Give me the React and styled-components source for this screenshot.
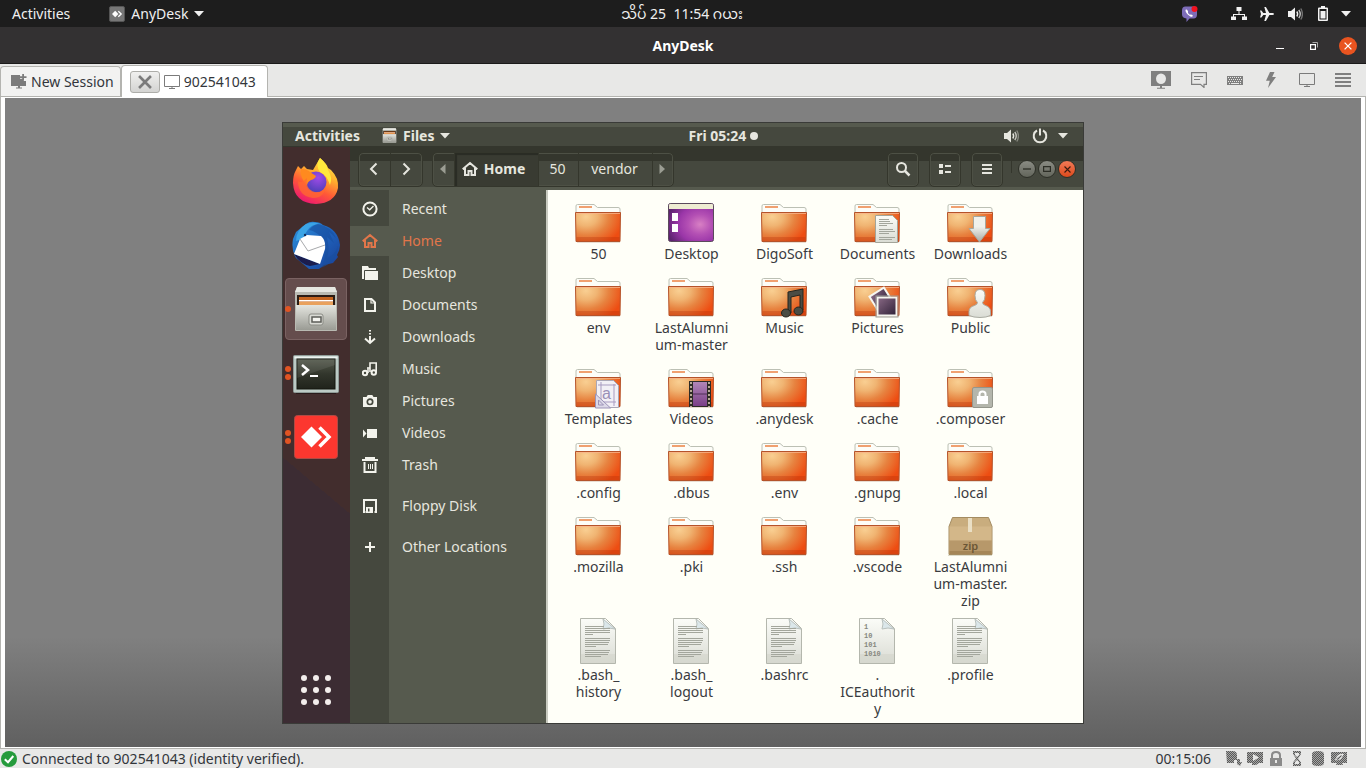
import React from "react";
import styled, { createGlobalStyle } from "styled-components";

const GlobalStyle = createGlobalStyle`
  * { box-sizing: border-box; }
  html, body { margin: 0; padding: 0; }
  body {
    font-family: "Noto Sans", "Open Sans", "Noto Sans Myanmar", Padauk, sans-serif;
    font-size: 14px;
    line-height: 20px;
    background: #e8e8e7;
  }
  button {
    font: inherit;
    color: inherit;
    background: none;
    border: 0;
    padding: 0;
    margin: 0;
    display: flex;
    align-items: center;
    justify-content: center;
  }
  a { color: inherit; text-decoration: none; }
  ul, nav, h1 { margin: 0; padding: 0; list-style: none; }
  svg { display: block; flex: none; }
`;

/* ---------- host desktop ---------- */

const Desktop = styled.div`
  display: flex;
  flex-direction: column;
  min-height: 100vh;
`;

const SystemBar = styled.header`
  display: grid;
  grid-template-columns: 1fr auto 1fr;
  align-items: center;
  height: 27px;
  padding: 0 14px;
  padding-left: 12px;
  background: #1d1d1d;
  color: #f0f0f0;
`;

const BarGroup = styled.div`
  display: flex;
  align-items: center;
  gap: ${(p) => p.$gap || 0}px;
  justify-content: ${(p) => (p.$end ? "flex-end" : "flex-start")};
`;

const AppMenu = styled.button`
  gap: 6px;
`;

const ClockButton = styled.button`
  gap: 4px;
  white-space: pre;
  line-height: 20px;
`;

const ClockDot = styled.span`
  width: 8px;
  height: 8px;
  border-radius: 50%;
  background: currentColor;
`;

const TrayButton = styled.button`
  width: ${(p) => p.$w || 20}px;
  height: 20px;
  margin-right: ${(p) => p.$after || 0}px;
`;

const TitleBar = styled.div`
  display: grid;
  grid-template-columns: 1fr auto 1fr;
  align-items: center;
  height: 37px;
  padding: 1px 9px 0;
  background: #333132;
  border-bottom: 1px solid #1b1a1a;
  color: #fff;
`;

const WindowTitle = styled.h1`
  grid-column: 2;
  font-size: 14px;
  line-height: 20px;
  font-weight: 700;
`;

const WindowButton = styled.button`
  width: 18px;
  height: 18px;
  border-radius: 50%;
  background: ${(p) => (p.$close ? "#e95420" : "transparent")};
`;

const TabBar = styled.div`
  display: flex;
  align-items: flex-end;
  height: 33px;
  padding-right: 13px;
  background: #e8e8e7;
  border-bottom: 1px solid #b4b4b0;
  color: #33363b;
`;

const TabItem = styled.div`
  display: flex;
  align-items: center;
  gap: 4px;
  height: ${(p) => (p.$active ? 32 : 30)}px;
  padding: ${(p) => (p.$active ? "0 11px 0 8px" : "0 6px 0 10px")};
  margin-bottom: ${(p) => (p.$active ? -1 : 0)}px;
  border: 1px solid #b4b4b0;
  border-bottom: 0;
  border-radius: 4px 4px 0 0;
  background: ${(p) => (p.$active ? "#fff" : "#f2f2f1")};
`;

const TabButton = styled.button`
  gap: 4px;
`;

const CloseTab = styled.button`
  width: 30px;
  height: 22px;
  border: 1px solid #adada9;
  border-radius: 3px;
  background: linear-gradient(#f0f0ef, #d4d4d2);
`;

const Tools = styled.div`
  display: flex;
  align-items: center;
  align-self: center;
  gap: 16px;
  margin-left: auto;
`;

const ToolButton = styled.button`
  min-width: 20px;
  height: 20px;
`;

const Stage = styled.main`
  flex: 1;
  display: flex;
  padding: 1px 4px;
  border: solid #b4b4b0;
  border-width: 0 1px 1px;
  background: #fff;
`;

const Canvas = styled.div`
  flex: 1;
  display: flex;
  align-items: center;
  justify-content: center;
  background: linear-gradient(#808080 83%, #606060);
`;

const StatusBar = styled.footer`
  display: flex;
  align-items: center;
  height: 19px;
  padding: 0 17px 0 1px;
  background: #e8e8e7;
  color: #33363b;
`;

const StatusText = styled.span`
  margin-left: 5px;
`;

const StatusIcons = styled.div`
  display: flex;
  gap: 3px;
  margin-left: 15px;
`;

const Elapsed = styled.time`
  margin-left: auto;
`;

/* ---------- remote desktop ---------- */

const Remote = styled.section`
  width: 100%;
  max-width: 802px;
  border: 1px solid #3a3b38;
  background: #3c2c33;
  color: #e6e6df;
`;

const RemoteBar = styled.div`
  display: grid;
  grid-template-columns: 5fr auto 4fr;
  align-items: center;
  height: 24px;
  padding: 3px 10px 0 12px;
  background: linear-gradient(#565a4e 4px, #45483e 4px);
  border-bottom: 1px solid #34362d;
  font-weight: 700;
`;

const RemoteMain = styled.div`
  display: flex;
`;

const Dock = styled.nav`
  display: flex;
  flex-direction: column;
  gap: 2px;
  width: 67px;
  padding: 3px 3px 2px 2px;
  background: linear-gradient(40deg, #3c2c33 42%, #422d2d 42%);
`;

const DockItem = styled.button`
  position: relative;
  width: 62px;
  height: 62px;
  margin-top: ${(p) => (p.$last ? "auto" : 0)};
  border: 1px solid ${(p) => (p.$focused ? "#7a6262" : "transparent")};
  border-radius: 4px;
  background: ${(p) => (p.$focused ? "#654d4d" : "transparent")};
`;

const RunningDots = styled.span`
  position: absolute;
  left: -1px;
  top: 50%;
  transform: translateY(-50%);
  display: grid;
  gap: 2px;
  i {
    width: 6px;
    height: 6px;
    border-radius: 50%;
    background: #e05423;
  }
`;

const FilesWindow = styled.div`
  flex: 1;
  min-width: 0;
  display: flex;
  flex-direction: column;
`;

const HeaderBar = styled.div`
  display: flex;
  align-items: center;
  height: 43px;
  padding: 2px 7px 0 8px;
  background: linear-gradient(#34362d 14px, #45483e 14px, #45483e 40px, #565a4e 40px);
`;

const ButtonGroup = styled.div`
  display: flex;
  height: 35px;
  margin-right: ${(p) => p.$after || 0}px;
  border: 1px solid #34362c;
  border-radius: 5px;
  box-shadow: inset 0 0 0 1px #4d5045;
`;

const HeaderButton = styled.button`
  width: ${(p) => (p.$w ? p.$w + "px" : "auto")};
  padding-right: ${(p) => (p.$pressed ? 6 : 2)}px;
  gap: 6px;
  font-weight: ${(p) => (p.$pressed ? 700 : 400)};
  background: ${(p) => (p.$pressed ? "#393b32" : "transparent")};
  box-shadow: ${(p) => (p.$pressed ? "inset 2px 2px 1px #2a2c24" : "none")};
  & + & { border-left: 1px solid #34362c; }
`;

const ActionButton = styled.button`
  width: 32px;
  height: 35px;
  border: 1px solid #34362c;
  border-radius: 5px;
  box-shadow: inset 0 0 0 1px #4d5045;
`;

const HeaderActions = styled.div`
  display: flex;
  gap: 10px;
  margin-left: auto;
`;

const Separator = styled.span`
  width: 1px;
  height: 16px;
  margin: 0 6px 8px 8px;
  background: #34362c;
`;

const RoundButtons = styled.div`
  display: flex;
  gap: 2px;
`;

const RoundButton = styled.button`
  width: 18px;
  height: 18px;
  border: 1px solid #2e3028;
  border-radius: 50%;
  background: ${(p) => (p.$close ? "linear-gradient(#f27a57, #dc4a1c)" : "linear-gradient(#8a8c84, #62655b)")};
`;

const Body = styled.div`
  flex: 1;
  display: flex;
  min-height: 533px;
`;

const Places = styled.nav`
  width: 198px;
  padding-top: 3px;
  background: linear-gradient(90deg, #45483e 39px, #565a4e 39px);
  border-right: 2px solid #c9cbc1;
`;

const Place = styled.a`
  display: flex;
  align-items: center;
  height: 32px;
  margin-top: ${(p) => (p.$apart ? 9 : 0)}px;
  color: ${(p) => (p.$current ? "#e2764a" : "#e6e6df")};
`;

const PlaceIcon = styled.span`
  display: flex;
  align-items: center;
  justify-content: center;
  width: 39px;
  height: 30px;
  margin-right: 13px;
  color: ${(p) => (p.$current ? "#e2764a" : "#f3f3ec")};
  background: ${(p) => (p.$current ? "#565a4e" : "transparent")};
`;

const FileGrid = styled.ul`
  flex: 1;
  display: grid;
  grid-template-columns: repeat(auto-fill, 93px);
  align-content: start;
  row-gap: 8px;
  padding: 6px 4px 0;
  background: #fffff8;
  color: #3a3b3f;
`;

const FileItem = styled.button`
  width: 100%;
  flex-direction: column;
  gap: 1px;
`;

const FileName = styled.span`
  line-height: 17px;
`;

const FileLine = styled.span`
  display: block;
`;

/* ---------- icons ---------- */

const SharedDefs = () => (
  <svg width="0" height="0" aria-hidden="true">
    <defs>
      <radialGradient id="folder" gradientUnits="userSpaceOnUse" cx="12" cy="21" r="38" gradientTransform="translate(0 4) scale(1 .8)">
        <stop offset="0" stopColor="#f9cf92" />
        <stop offset=".3" stopColor="#f0b472" />
        <stop offset=".6" stopColor="#e78340" />
        <stop offset="1" stopColor="#ee4d12" />
      </radialGradient>
      <radialGradient id="desk" cx=".7" cy=".55" r=".75">
        <stop offset="0" stopColor="#d880c4" />
        <stop offset=".35" stopColor="#b450b4" />
        <stop offset=".65" stopColor="#9a36a8" />
        <stop offset="1" stopColor="#5d2370" />
      </radialGradient>
      <linearGradient id="paper" x1="0" y1="0" x2="0" y2="1">
        <stop offset="0" stopColor="#fbfcf8" />
        <stop offset="1" stopColor="#dadcd4" />
      </linearGradient>
      <linearGradient id="metal" x1="0" y1="0" x2="0" y2="1">
        <stop offset="0" stopColor="#e4e5df" />
        <stop offset="1" stopColor="#9a9b94" />
      </linearGradient>
      <linearGradient id="arrow" x1="0" y1="0" x2="0" y2="1">
        <stop offset=".4" stopColor="#f0f1ec" />
        <stop offset="1" stopColor="#a9aaa4" />
      </linearGradient>
      <linearGradient id="film" x1="0" y1="0" x2="0" y2="1">
        <stop offset="0" stopColor="#b186b8" />
        <stop offset="1" stopColor="#7a3f88" />
      </linearGradient>
      <linearGradient id="photo" x1="0" y1="0" x2="1" y2="1">
        <stop offset="0" stopColor="#8a6a86" />
        <stop offset="1" stopColor="#2e2036" />
      </linearGradient>
      <linearGradient id="fox" x1=".8" y1="0" x2=".3" y2="1">
        <stop offset="0" stopColor="#fff04a" />
        <stop offset=".35" stopColor="#ffb02e" />
        <stop offset=".65" stopColor="#ff5a36" />
        <stop offset="1" stopColor="#ec1672" />
      </linearGradient>
      <radialGradient id="globe" cx=".6" cy=".3" r=".7">
        <stop offset="0" stopColor="#a04be8" />
        <stop offset="1" stopColor="#4f3fb8" />
      </radialGradient>
      <linearGradient id="bird" x1="0" y1="0" x2="1" y2="1">
        <stop offset="0" stopColor="#2f94dc" />
        <stop offset=".5" stopColor="#1f63bd" />
        <stop offset="1" stopColor="#1a3f94" />
      </linearGradient>
      <linearGradient id="term" x1="0" y1="0" x2="0" y2="1">
        <stop offset="0" stopColor="#555a4d" />
        <stop offset=".5" stopColor="#32362c" />
        <stop offset="1" stopColor="#20231b" />
      </linearGradient>
      <pattern id="dither" width="2" height="2" patternUnits="userSpaceOnUse">
        <rect width="2" height="2" fill="#a6a6a5" />
        <rect width="1" height="1" fill="#585858" />
        <rect x="1" y="1" width="1" height="1" fill="#585858" />
      </pattern>
    </defs>
  </svg>
);

const Caret = () => (
  <svg width="10" height="6" viewBox="0 0 10 6"><path d="M0 0h10L5 5.5z" fill="currentColor" /></svg>
);

const AnyDeskMark = () => (
  <svg width="16" height="16" viewBox="0 0 16 16">
    <rect x=".5" y=".5" width="15" height="15" rx="1.5" fill="#777" stroke="#555" />
    <path d="M6.2 4.8 9.4 8l-3.2 3.200L3 8z" fill="#fff" />
    <path d="M9.3 5.200 12.200 8l-2.900 2.800" fill="none" stroke="#fff" strokeWidth="1.300" />
  </svg>
);

const Viber = () => (
  <svg width="18" height="18" viewBox="0 0 18 18">
    <path d="M4.5 1.500h8q3.500 0 3.500 4v4q0 4-3.500 4H8.500L5.500 17v-3.600Q1 13 1 9.500v-4q0-4 3.500-4z" fill="#7d6cb8" />
    <path d="M4.800 4.500c-1 .8.200 3.300 2.200 5.200s4 2.600 4.700 1.600-1.700-2.300-2.500-1.500C8.300 9.700 6.700 8 6.900 7.200c.8-.7-.9-3.300-2.100-2.700z" fill="#fff" />
    <circle cx="13.500" cy="4" r="3" fill="#f1121f" />
  </svg>
);

const Network = () => (
  <svg width="16" height="14" viewBox="0 0 16 14">
    <path d="M5.500 0h5v4h-2v3H14v2.500h2V13h-5V9.500h2V8H3v1.500h2V13H0V9.500h2V7h5.500V4h-2z" fill="#f2f2f2" />
  </svg>
);

const Plane = () => (
  <svg width="14" height="14" viewBox="0 0 14 14">
    <path d="M0 3.500h1.400L3.300 6H6L4.300 0h1.600l3.500 6h3q1.600.2 1.600 1t-1.600 1h-3l-3.500 6H4.300L6 8H3.300l-1.900 2.500H0L1 7z" fill="#f2f2f2" />
  </svg>
);

const Sound = () => (
  <svg width="15" height="14" viewBox="0 0 15 14" fill="none" strokeWidth="1.400">
    <path d="M0 4h3l4-3.500v13L3 10H0z" fill="currentColor" />
    <path d="M8.800 4.500q1.700 2.500 0 5" stroke="currentColor" />
    <path d="M10.800 3q2.900 4 0 8" stroke="currentColor" opacity=".8" />
    <path d="M12.800 1.500q3.200 5.500 0 11" stroke="currentColor" opacity=".4" />
  </svg>
);

const Battery = () => (
  <svg width="10" height="15" viewBox="0 0 10 15">
    <path d="M3 0h4v1.500h2q1 0 1 1V14q0 1-1 1H1q-1 0-1-1V2.500q0-1 1-1h2zM1.500 3v10.500h7V3z" fill="#f2f2f2" fillRule="evenodd" />
    <rect x="2.500" y="5" width="5" height="7.500" fill="#f2f2f2" />
  </svg>
);

const Minimize = () => (
  <svg width="8" height="10" viewBox="0 0 8 10"><path d="M0 7h8v1H0z" fill="#fff" /></svg>
);

const Restore = () => (
  <svg width="8" height="8" viewBox="0 0 8 8" fill="none">
    <path d="M.6 2.600h4.800v4.800H.6z" stroke="#fff" strokeWidth="1.200" />
    <path d="M2.500.5h5v5" stroke="#aaa" />
  </svg>
);

const Cross = ({ size, color, weight }) => (
  <svg width={size} height={size} viewBox="0 0 8 8">
    <path d="M.6.600l6.800 6.800M7.400.600.6 7.400" stroke={color} strokeWidth={weight} />
  </svg>
);

const NewSessionIcon = () => (
  <svg width="16" height="15" viewBox="0 0 16 15" fill="#7b7b7b">
    <path d="M0 1h9v3.800h3.800V7H15v5H9v1.500h2v1H5v-1h2V12H0z" />
    <path d="M11.200 0h1.800v2.300h2.500V4H13v2.300h-1.800V4H9V2.300h2.200z" />
  </svg>
);

const Monitor = () => (
  <svg width="16" height="14" viewBox="0 0 16 14" fill="none" stroke="#7b7b7b">
    <path d="M.5.500h15v11H.5zM8 12v1M5 13.500h6" />
  </svg>
);

const ToolScreen = () => (
  <svg width="24" height="18" viewBox="-2 0 24 18">
    <path d="M0 0h20v15h-9v1.800h3v1H6v-1h3V15H0z" fill="#7f7f7f" />
    <ellipse cx="10" cy="7.800" rx="5" ry="5.300" fill="#e8e8e7" />
  </svg>
);

const ToolChat = () => (
  <svg width="16" height="16" viewBox="0 0 16 16" fill="none" stroke="#7f7f7f">
    <path d="M.6.600h14.800v11.800H13v3L9.500 12.400H.6z" strokeWidth="1.200" />
    <path d="M3 4.500h9M3 7.500h6" />
  </svg>
);

const ToolKeyboard = () => (
  <svg width="16" height="9" viewBox="0 0 16 9">
    <path d="M0 0h16v9H0z" fill="#7f7f7f" />
    <path d="M1 1.500h14M2 3.500h13M1 5.500h14" stroke="#e8e8e7" strokeDasharray="1 1" />
    <path d="M2 7.500h1M4 7.500h8M13 7.500h1" stroke="#e8e8e7" />
  </svg>
);

const ToolBolt = () => (
  <svg width="10" height="16" viewBox="0 0 10 16"><path d="M4 0h4.500L6.200 5H10L2 16l1.800-7.300H0z" fill="#7f7f7f" /></svg>
);

const ToolMenu = () => (
  <svg width="16" height="15" viewBox="0 0 16 15"><path d="M0 0h16v2H0zM0 4h16v2H0zM0 8h16v2H0zM0 12h16v2H0z" fill="#7f7f7f" /></svg>
);

const Check = () => (
  <svg width="16" height="16" viewBox="0 0 16 16">
    <circle cx="8" cy="8" r="8" fill="#259b3c" />
    <path d="M3.800 8.200 7 11.200 12.300 5" fill="none" stroke="#fff" strokeWidth="2" />
  </svg>
);

const statusShapes = [
  <path key="a" d="M0 0h8q3 1 3 4v4h3v3h2l-2 4-3-2V9H8v3H1z" />,
  <path key="b" fillRule="evenodd" d="M0 1h16v11h-4l-3 2H5v-2H0zM6 3v7l6-3.500z" />,
  <path key="c" fill="#8a8a8a" fillRule="evenodd" d="M2 7h1V4q0-4 5-4t5 4v3h1v8H2zM5 7h6V4.500Q11 2 8 2T5 4.500zM7 9v3h2V9z" />,
  <path key="d" fillRule="evenodd" d="M4 0h8v3L9 7.500l3 4V15H4v-3.500l3-4L4 3zM6 2v2l2 2 2-2V2zM8 9l-2 2v2h4v-2z" />,
  <path key="e" d="M2 3q0-3 6-3t6 3v9q0 3-6 3t-6-3z" />,
  <path key="f" fillRule="evenodd" d="M0 1h16v11h-5l1 2H5l1-2H0zM4 9q3 1 6-1l3-5Q9 2 6 5zM5 8l5-4 1 1-4 4z" />,
];

/* dock */

const Firefox = () => (
  <svg width="48" height="48" viewBox="0 0 48 48">
    <path d="M4 13 6 9l3 3 3-3 3 3 6 1 7-12q7 6 8 10l3 2q8 8 7 18-3 15-22 16Q2 46 1 26 1 18 4 13z" fill="url(#fox)" />
    <circle cx="24" cy="25" r="10.500" fill="url(#globe)" />
    <path d="M9 12q6 0 9 3l6 4q-1 3-5 4-4 2-4 6-3-4-5-8-2-4-1-9z" fill="#ff8a1f" />
    <path d="M28 1q7 6 8 12 5 8 2 15-3-10-10-13-5-7 0-14z" fill="#ffe93c" />
    <path d="M15 21q-2 11 8 14 9 1 11-7-1 13-13 13Q6 39 6 24q3 3 9-3z" fill="#ff6a2f" opacity=".75" />
  </svg>
);

const Thunderbird = () => (
  <svg width="50" height="50" viewBox="0 0 50 50">
    <path d="M15 4q4-3 9-2 5 0 8 3Q47 9 49 25q0 5-3 10l1 2-5 6-9 2-5 4H18L5 38Q0 30 2 19l3-7z" fill="url(#bird)" />
    <path d="M15 4q8-3 14 0-9 0-13 7l-5 8-6 2Q5 10 15 4z" fill="#3ba4e6" />
    <path d="M27 4q14 3 18 14l-7-6 5 11-7-6Q39 30 36 38q8-3 11-12-1 17-18 22 5-6 5-14 0-21-16-24 4-5 9-6z" fill="#184e9f" opacity=".6" />
    <path d="M3 34q6 10 16 12l10-2z" fill="#1b1d4e" />
    <path d="m9 19 7-4 14 1q5 4 4 13l-5 15L3 34z" fill="#fff" />
    <path d="m9 19 8 12 17-6" fill="none" stroke="#a7a9ac" />
    <circle cx="14" cy="15" r="1.200" fill="#12315f" />
  </svg>
);

const Drawer = ({ size }) => (
  <svg width={size} height={size} viewBox="0 0 46 46">
    <path d="M4 1h38l2 5v38q0 1-1 1H3q-1 0-1-1V6z" fill="#b9bab2" />
    <path d="M4 1h38l2 5H2z" fill="#e6e7e1" />
    <path d="M4 9h38v10H4z" fill="#2a1c14" />
    <path d="M6 11h34v8H6z" fill="#c4641f" />
    <path d="M6 14h34v1.500H6z" fill="#fff" />
    <path d="M6 16h34v3H6z" fill="#e9a15c" />
    <path d="M3 19h40v25H3z" fill="url(#metal)" />
    <rect x="16" y="28" width="14" height="11" rx="2" fill="#d9dad4" stroke="#8a8b84" />
    <rect x="19" y="31" width="9" height="5" fill="#f4f4ef" stroke="#5c5d58" strokeWidth="1.500" />
  </svg>
);

const Terminal = () => (
  <svg width="46" height="44" viewBox="0 0 46 44">
    <rect x="3" y="41" width="40" height="2" fill="#291b1b" />
    <rect x=".5" y="4.500" width="45" height="37" rx="1" fill="#bccac5" stroke="#8f9c98" />
    <rect x="1.500" y="5.500" width="43" height="2" fill="#edf4f1" />
    <rect x="4" y="8" width="38" height="30" fill="url(#term)" stroke="#15170f" />
    <path d="M4 27 42 14V8H4z" fill="#fff" opacity=".08" />
    <path d="m9 14 6 5-6 5" fill="none" stroke="#fff" strokeWidth="2.500" />
    <path d="M17 24h8v2h-8z" fill="#fff" />
  </svg>
);

const AnyDeskIcon = () => (
  <svg width="44" height="44" viewBox="0 0 44 44">
    <rect x=".5" y=".5" width="43" height="43" rx="3" fill="#fc372f" stroke="#b04a44" />
    <path d="M17.500 11.500 28 22 17.500 32.500 7 22z" fill="#fff" />
    <path d="m25.500 12.500 9.500 9.500-9.500 9.500" fill="none" stroke="#fff" strokeWidth="3.500" />
  </svg>
);

const AppsGrid = () => (
  <svg width="30" height="30" viewBox="0 0 30 30" fill="#f3eeec">
    {[3, 15, 27].map((y) => [3, 15, 27].map((x) => <circle key={x + "-" + y} cx={x} cy={y} r="3" />))}
  </svg>
);

/* sidebar, 16px glyphs */

const Glyph = ({ children, size = 16 }) => (
  <svg width={size} height={size} viewBox="0 0 16 16" fill="none" stroke="currentColor" strokeWidth="2">{children}</svg>
);

const HomeGlyph = () => (
  <Glyph><path d="M.7 8.300 8 2l7.300 6.300M3 7v7h3.500v-4h3v4H13V7" /></Glyph>
);

const placeGlyphs = {
  Recent: <Glyph><circle cx="8" cy="8" r="6.600" /><path d="m5 6.500 2.700 2.300L11.500 5" strokeWidth="1.300" /></Glyph>,
  Home: <HomeGlyph />,
  Desktop: <Glyph><path d="M0 1h6l1 2h7v2H3.500v9H0zM4.500 6H16v9H2V6z" fill="currentColor" stroke="none" /><path d="M2.500 15V5.500H15" stroke="#45483e" strokeWidth="1" /></Glyph>,
  Documents: <Glyph><path d="M3 2h6.500L13 5.500V14H3z" /><path d="M9 1.500V6h4" strokeWidth="1.200" /></Glyph>,
  Downloads: <Glyph><path d="M8 1v1.500M8 4v1.500M8 7v6" /><path d="m3 9.500 5 4.500 5-4.500" /></Glyph>,
  Music: <Glyph><circle cx="3" cy="12" r="2.200" /><circle cx="11.800" cy="11.500" r="2.200" /><path d="M6 12V7.500M8 11V2h6.200v9.500" strokeWidth="1.600" /><path d="M5 7h3" strokeWidth="1.600" /></Glyph>,
  Pictures: <Glyph><path d="M1 4h3.500l1.200-2h4.600l1.200 2H15v10H1z" fill="currentColor" stroke="none" /><circle cx="8" cy="8.800" r="2.700" stroke="#45483e" strokeWidth="1.700" /></Glyph>,
  Videos: <Glyph><path d="M5 4h10v9H5zM1 4.500l3.500 4L1 12.500z" fill="currentColor" stroke="none" /></Glyph>,
  Trash: <Glyph><path d="M0 3h16M2.500 5v10h11V5" /><path d="M3 1h10" /><path d="M6.500 7v5M8.500 7v5M10.500 7v5" strokeWidth="1" /></Glyph>,
  "Floppy Disk": <Glyph><path d="M3.500 14H2V2h12v12h-1.500" /><path d="M4 9h7v6H4zM6 10.500v3h1.500v-3z" fill="currentColor" fillRule="evenodd" stroke="none" /></Glyph>,
  "Other Locations": <Glyph><path d="M8 3v10M3 8h10" /></Glyph>,
};

/* files, 48px */

const FolderBase = () => (
  <>
    <path d="M2 17V10q0-1.500 1.500-1.500H20l3.500 3H44q2 0 2 1.500v4z" fill="#fdfdf8" stroke="#bcc0b4" />
    <path d="M5 10h13v2H5z" fill="#f0a070" />
    <path d="M3 46h43v1H3z" fill="#d8c4b8" opacity=".6" />
    <path d="M1.500 16.500h45l-.5 29H2z" fill="url(#folder)" stroke="#b5532a" />
    <path d="M2.500 41h43v4h-43z" fill="#a82c06" opacity=".28" />
    <path d="M2 17.500h44" stroke="#f9b48a" opacity=".8" />
  </>
);

const TextLines = ({ x, y, w, rows }) => (
  <g stroke="#a3a69c" strokeWidth="1">
    {rows.map((r, i) => r > 0 && <path key={i} d={`M${x} ${y + i * 2 + 0.5}h${Math.round(w * r)}`} />)}
  </g>
);

const emblems = {
  documents: (
    <g>
      <path d="M22.500 19.500h17l5 5v22h-22z" fill="url(#paper)" stroke="#a3a59a" />
      <TextLines x={26} y={23} w={16} rows={[0.6, 0.7, 0.9, 0.5, 0, 0.9, 1, 0.6, 0, 1, 0.8]} />
    </g>
  ),
  downloads: <path d="M27.500 20.500h12v12h4.500L33.500 46 23 32.500h4.500z" fill="url(#arrow)" stroke="#a5a79e" />,
  music: (
    <g fill="#4a4c44" stroke="#24251f">
      <path d="M28 22l15-3v21h-3V25l-9 2v16h-3z" />
      <ellipse cx="26" cy="43" rx="4.500" ry="4" /><ellipse cx="38.500" cy="41" rx="4.500" ry="4" />
    </g>
  ),
  pictures: (
    <g stroke="#f6f6f0" strokeWidth="2">
      <rect x="20" y="21" width="17" height="17" transform="rotate(-32 28 30)" fill="url(#photo)" />
      <rect x="24.500" y="27.500" width="19" height="18" fill="url(#photo)" />
      <rect x="23" y="26" width="22" height="21" fill="none" stroke="#9c9d96" strokeWidth="1" />
    </g>
  ),
  public: (
    <path d="M34 19.500q5 0 5 6 0 5-2.500 7 0 2 3 3 5 1.500 5 6v4q-4 2-10.500 2t-11-2v-4q0-4.500 5.500-6 3-1 3-3-2.500-2-2.500-7 0-6 5-6z" fill="url(#paper)" stroke="#a9aba2" />
  ),
  templates: (
    <g>
      <path d="M22.500 19.500h17l5 5v22h-22z" fill="#f2f0f6" stroke="#a9a7b6" />
      <path d="M24 24h18M24 41h18M27 21v24M40 23v22" stroke="#a79bc0" />
      <text x="28" y="38" fontSize="16" fill="#9a8fb6" fontFamily="Liberation Sans, sans-serif">a</text>
      <path d="M21.500 33v14h15z" fill="#dcd9e8" stroke="#9c93b8" /><path d="M24.500 39v5h5z" fill="none" stroke="#9c93b8" />
    </g>
  ),
  videos: (
    <g>
      <rect x="22" y="20" width="22" height="26" fill="#2d2b26" />
      <rect x="26" y="21" width="14" height="24" fill="url(#film)" />
      <path d="M26 33h14" stroke="#513058" />
      <path d="M24 21v25M42 21v25" stroke="#b8a998" strokeWidth="2" strokeDasharray="2 2" />
    </g>
  ),
  lock: (
    <g>
      <rect x="26.500" y="26.500" width="20" height="20" rx="1.500" fill="#b4b6ac" stroke="#94968c" />
      <path d="M31 35h11v8H31z" fill="#fff" /><path d="M33.500 35v-2q0-2.500 3-2.500t3 2.500v2" fill="none" stroke="#fff" strokeWidth="2" />
    </g>
  ),
};

const PageBase = ({ children }) => (
  <>
    <path d="M6.500 1.500h25l10 10v35h-35z" fill="url(#paper)" stroke="#b4b7ad" />
    <path d="M7 37h34v9H7z" fill="#d3d5cb" opacity=".6" />
    <path d="M29 2q2 5 0 10 6-2 12 0z" fill="#dbe7ea" stroke="#b8c0bd" />
    {children}
  </>
);

const ZipBox = () => (
  <>
    <path d="M2 46h44v1H2z" fill="#dedccb" />
    <path d="M6.500 8.500h36l3.500 9v28H3v-28z" fill="#c9ad7e" stroke="#a48c62" />
    <path d="M3.500 17.500h42v14h-42z" fill="#d3b789" />
    <path d="M3.500 31.500h42V45h-42z" fill="#b7986a" />
    <path d="M3.500 42h42v3h-42z" fill="#a58658" />
    <path d="M22 9h4v14h-4z" fill="#eadfc5" />
    <text x="24.500" y="41" textAnchor="middle" fontSize="11" fontWeight="600" fill="#6b5636">zip</text>
  </>
);

const FileIcon = ({ kind }) => {
  let art;
  if (kind === "desktop") {
    art = (
      <>
        <rect x="1.500" y="7.500" width="45" height="38" rx="2" fill="url(#desk)" stroke="#5b4a5c" />
        <path d="M2 13V9q0-1 1-1h42q1 0 1 1v4z" fill="#eeecd2" />
        <path d="M5 17h6v8H5zM5 28h6v8H5z" fill="#fff" />
      </>
    );
  } else if (kind === "zip") art = <ZipBox />;
  else if (kind === "text") {
    art = <PageBase><TextLines x={11} y={9} w={25} rows={[0.75, 1, 1, 1, 0.3, 0, 1, 1, 0.95, 0.9, 0.45, 0, 1, 0.95, 0.9, 0.65]} /></PageBase>;
  } else if (kind === "binary") {
    art = (
      <PageBase>
        <g fontSize="7" fontWeight="700" fontFamily="Liberation Mono, monospace" fill="#85877e">
          {["1", "10", "101", "1010"].map((t, i) => <text key={t} x="11" y={12 + i * 9}>{t}</text>)}
        </g>
      </PageBase>
    );
  } else art = <><FolderBase />{emblems[kind]}</>;
  return <svg width="48" height="48" viewBox="1 0 48 48" aria-hidden="true">{art}</svg>;
};

const files = [
  ["50"], ["Desktop", "desktop"], ["DigoSoft"], ["Documents", "documents"], ["Downloads", "downloads"],
  ["env"], ["LastAlumni|um-master"], ["Music", "music"], ["Pictures", "pictures"], ["Public", "public"],
  ["Templates", "templates"], ["Videos", "videos"], [".anydesk"], [".cache"], [".composer", "lock"],
  [".config"], [".dbus"], [".env"], [".gnupg"], [".local"],
  [".mozilla"], [".pki"], [".ssh"], [".vscode"], ["LastAlumni|um-master.|zip", "zip"],
  [".bash_|history", "text"], [".bash_|logout", "text"], [".bashrc", "text"], [".|ICEauthorit|y", "binary"], [".profile", "text"],
];

const dockItems = [
  { name: "Firefox", icon: <Firefox />, dots: 0 },
  { name: "Thunderbird", icon: <Thunderbird />, dots: 0 },
  { name: "Files", icon: <Drawer size={46} />, dots: 1, focused: true },
  { name: "Terminal", icon: <Terminal />, dots: 2 },
  { name: "AnyDesk", icon: <AnyDeskIcon />, dots: 2 },
];

const tools = [
  ["Screen", <ToolScreen />], ["Chat", <ToolChat />], ["Keyboard", <ToolKeyboard />],
  ["Actions", <ToolBolt />], ["Display", <Monitor />], ["Menu", <ToolMenu />],
];

function RemoteDesktop() {
  return (
    <Remote>
      <RemoteBar>
        <BarGroup $gap={22}>
          <button>Activities</button>
          <AppMenu><Drawer size={15} />Files<Caret /></AppMenu>
        </BarGroup>
        <ClockButton>Fri 05:24<ClockDot /></ClockButton>
        <BarGroup $end>
          <TrayButton $after={9} aria-label="Volume"><Sound /></TrayButton>
          <TrayButton $after={3} aria-label="Power">
            <Glyph><path d="M5 2.500a6.300 6.300 0 1 0 6 0M8 .5v7" /></Glyph>
          </TrayButton>
          <TrayButton aria-label="System menu"><Caret /></TrayButton>
        </BarGroup>
      </RemoteBar>
      <RemoteMain>
        <Dock>
          {dockItems.map((d) => (
            <DockItem key={d.name} $focused={d.focused} aria-label={d.name}>
              {d.dots > 0 && <RunningDots>{Array.from({ length: d.dots }, (_, i) => <i key={i} />)}</RunningDots>}
              {d.icon}
            </DockItem>
          ))}
          <DockItem $last aria-label="Show applications"><AppsGrid /></DockItem>
        </Dock>
        <FilesWindow>
          <HeaderBar>
            <ButtonGroup $after={9}>
              <HeaderButton $w={31} aria-label="Back"><Glyph><path d="M10.500 2.500 5 8l5.500 5.500" /></Glyph></HeaderButton>
              <HeaderButton $w={32} aria-label="Forward"><Glyph><path d="M5.500 2.500 11 8l-5.500 5.500" /></Glyph></HeaderButton>
            </ButtonGroup>
            <ButtonGroup>
              <HeaderButton $w={21} aria-label="Scroll left"><svg width="6" height="10" viewBox="0 0 6 10"><path d="M5.500 0v10L0 5z" fill="#9b9d93" /></svg></HeaderButton>
              <HeaderButton $w={84} $pressed><HomeGlyph />Home</HeaderButton>
              <HeaderButton $w={40}>50</HeaderButton>
              <HeaderButton $w={74}>vendor</HeaderButton>
              <HeaderButton $w={21} aria-label="Scroll right"><svg width="6" height="10" viewBox="0 0 6 10"><path d="M.5 0v10L6 5z" fill="#9b9d93" /></svg></HeaderButton>
            </ButtonGroup>
            <HeaderActions>
              <ActionButton aria-label="Search"><Glyph><circle cx="6.500" cy="6.500" r="4.500" /><path d="m9.500 9.500 5 5" strokeWidth="2.500" /></Glyph></ActionButton>
              <ActionButton aria-label="View"><Glyph><path d="M2 3h4v4H2zM2 9h4v4H2zM8 4h6v2H8zM8 10h6v2H8z" fill="currentColor" stroke="none" /></Glyph></ActionButton>
              <ActionButton aria-label="Menu"><Glyph><path d="M3 4h10M3 8h10M3 12h10" /></Glyph></ActionButton>
            </HeaderActions>
            <Separator />
            <RoundButtons>
              <RoundButton aria-label="Minimize"><svg width="8" height="8" viewBox="0 0 8 8"><path d="M0 4h8" stroke="#2c2e26" strokeWidth="1.300" /></svg></RoundButton>
              <RoundButton aria-label="Maximize"><svg width="8" height="6" viewBox="0 0 8 6"><path d="M.6.600h6.800v4.800H.6z" fill="none" stroke="#2c2e26" strokeWidth="1.200" /></svg></RoundButton>
              <RoundButton $close aria-label="Close window"><Cross size={7} color="#3a1a10" weight={1.3} /></RoundButton>
            </RoundButtons>
          </HeaderBar>
          <Body>
            <Places>
              {Object.keys(placeGlyphs).map((name) => (
                <Place key={name} href="#" $current={name === "Home"} $apart={name === "Floppy Disk" || name === "Other Locations"}>
                  <PlaceIcon $current={name === "Home"}>{placeGlyphs[name]}</PlaceIcon>
                  {name}
                </Place>
              ))}
            </Places>
            <FileGrid>
              {files.map(([name, kind]) => (
                <li key={name}>
                  <FileItem>
                    <FileIcon kind={kind} />
                    <FileName>{name.split("|").map((line) => <FileLine key={line}>{line}</FileLine>)}</FileName>
                  </FileItem>
                </li>
              ))}
            </FileGrid>
          </Body>
        </FilesWindow>
      </RemoteMain>
    </Remote>
  );
}

export default function App() {
  return (
    <Desktop>
      <GlobalStyle />
      <SystemBar>
        <BarGroup $gap={39}>
          <button>Activities</button>
          <AppMenu><AnyDeskMark />AnyDesk<Caret /></AppMenu>
        </BarGroup>
        <ClockButton>သိပ် 25  11:54 ဂယး</ClockButton>
        <BarGroup $end>
          <TrayButton $after={29} aria-label="Viber"><Viber /></TrayButton>
          <TrayButton $after={8} aria-label="Network"><Network /></TrayButton>
          <TrayButton $after={8} aria-label="Airplane mode"><Plane /></TrayButton>
          <TrayButton $after={8} aria-label="Volume"><Sound /></TrayButton>
          <TrayButton $after={7} aria-label="Battery"><Battery /></TrayButton>
          <TrayButton $w={12} aria-label="System menu"><Caret /></TrayButton>
        </BarGroup>
      </SystemBar>
      <TitleBar>
        <WindowTitle>AnyDesk</WindowTitle>
        <BarGroup $end $gap={16}>
          <WindowButton aria-label="Minimize"><Minimize /></WindowButton>
          <WindowButton aria-label="Restore"><Restore /></WindowButton>
          <WindowButton $close aria-label="Close"><Cross size={8} color="#fff" weight={1.3} /></WindowButton>
        </BarGroup>
      </TitleBar>
      <TabBar>
        <TabItem><TabButton><NewSessionIcon />New Session</TabButton></TabItem>
        <TabItem $active>
          <CloseTab aria-label="Close tab"><Cross size={14} color="#7b7b7b" weight={1.5} /></CloseTab>
          <TabButton><Monitor />902541043</TabButton>
        </TabItem>
        <Tools>
          {tools.map(([label, icon]) => <ToolButton key={label} aria-label={label}>{icon}</ToolButton>)}
        </Tools>
      </TabBar>
      <Stage>
        <Canvas><RemoteDesktop /></Canvas>
      </Stage>
      <StatusBar>
        <Check />
        <StatusText>Connected to 902541043 (identity verified).</StatusText>
        <Elapsed>00:15:06</Elapsed>
        <StatusIcons>
          {statusShapes.map((shape, i) => (
            <svg key={i} width="18" height="16" viewBox="0 0 18 16" fill="url(#dither)">{shape}</svg>
          ))}
        </StatusIcons>
      </StatusBar>
      <SharedDefs />
    </Desktop>
  );
}
